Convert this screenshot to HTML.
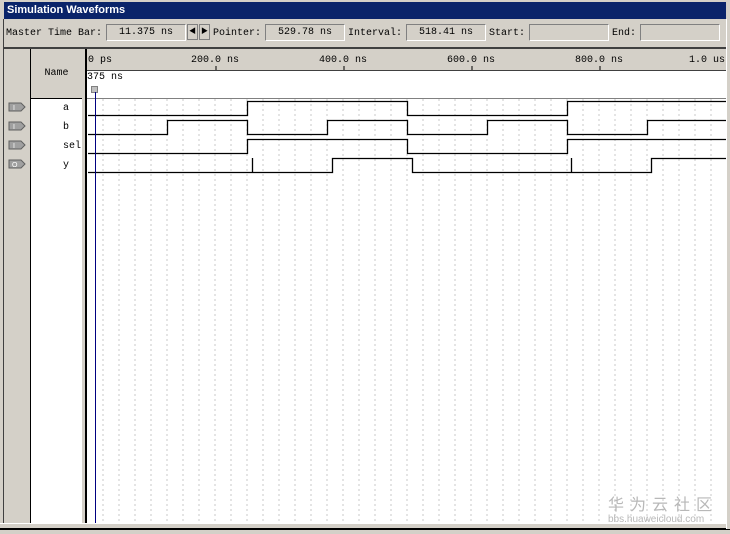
<!DOCTYPE html>
<html><head><meta charset="utf-8"><style>
body{margin:0;width:730px;height:534px;background:#d4d0c8;position:relative;overflow:hidden;font-family:"Liberation Mono","Noto Sans CJK SC",monospace;font-size:10px;}
.a{position:absolute}
.box{position:absolute;top:24px;height:17px;background:#d4d0c8;border:1px solid;border-color:#808080 #fff #fff #808080;box-sizing:border-box;text-align:center;line-height:16px}
.lbl{position:absolute;top:28px}
</style></head><body>
<div class="a" style="left:0;top:0;width:730px;height:2px;background:#d4d0c8"></div>
<div class="a" style="left:4px;top:2px;width:722px;height:17px;background:#0a246a;color:#fff;font:bold 11px 'Liberation Sans',sans-serif;line-height:17px;padding-left:3px;box-sizing:border-box">Simulation Waveforms</div>
<div class="a" style="left:3px;top:19px;width:1px;height:510px;background:#404040"></div>
<span class="lbl" style="left:6px">Master Time Bar:</span>
<div class="box" style="left:106px;width:80px">11.375 ns</div>
<div class="a" style="left:187px;top:24px;width:11px;height:16px;background:#d4d0c8;border:1px solid #808080;box-sizing:border-box;font-size:7px;text-align:center;line-height:14px">◀</div>
<div class="a" style="left:199px;top:24px;width:11px;height:16px;background:#d4d0c8;border:1px solid #808080;box-sizing:border-box;font-size:7px;text-align:center;line-height:14px">▶</div>
<span class="lbl" style="left:213px">Pointer:</span>
<div class="box" style="left:265px;width:80px">529.78 ns</div>
<span class="lbl" style="left:348px">Interval:</span>
<div class="box" style="left:406px;width:80px">518.41 ns</div>
<span class="lbl" style="left:489px">Start:</span>
<div class="box" style="left:529px;width:80px"></div>
<span class="lbl" style="left:612px">End:</span>
<div class="box" style="left:640px;width:80px"></div>
<div class="a" style="left:4px;top:47px;width:722px;height:2px;background:#404040"></div>
<div class="a" style="left:4px;top:49px;width:26px;height:474px;background:#d4d0c8;border-right:1px solid #000"></div>
<div class="a" style="left:31px;top:49px;width:51px;height:49px;line-height:49px;text-align:center">Name</div>
<div class="a" style="left:31px;top:98px;width:51px;height:425px;background:#fff;border-top:1px solid #000"></div>
<div class="a" style="left:82px;top:49px;width:3px;height:474px;background:#d4d0c8"></div>
<div class="a" style="left:85px;top:49px;width:2px;height:474px;background:#000"></div>
<div class="a" style="left:87px;top:49px;width:639px;height:474px;background:#fff"></div>
<div class="a" style="left:87px;top:49px;width:639px;height:21px;background:#d4d0c8;border-bottom:1px solid #404040"></div>
<div class="a" style="left:88px;top:55px">0 ps</div>
<div class="a" style="left:191px;top:55px">200.0 ns</div>
<div class="a" style="left:319px;top:55px">400.0 ns</div>
<div class="a" style="left:447px;top:55px">600.0 ns</div>
<div class="a" style="left:575px;top:55px">800.0 ns</div>
<div class="a" style="left:689px;top:55px">1.0 us</div>
<div class="a" style="left:87px;top:72px">375 ns</div>
<div class="a" style="left:91px;top:86px;width:7px;height:7px;background:#c0c0c0;border:1px solid #808080;box-sizing:border-box"></div>
<div class="a" style="left:87px;top:98px;width:639px;height:1px;background:#808080"></div>
<div class="a" style="left:63px;top:103px">a</div>
<div class="a" style="left:63px;top:122px">b</div>
<div class="a" style="left:63px;top:141px">sel</div>
<div class="a" style="left:63px;top:160px">y</div>
<svg class="a" style="left:0;top:0" width="730" height="534">
<g fill="#a0a0a0" stroke="#606060" stroke-width="1">
<path d="M9 103h12l4 4-4 4H9z"/><path d="M9 122h12l4 4-4 4H9z"/><path d="M9 141h12l4 4-4 4H9z"/><path d="M9 160h12l4 4-4 4H9z"/>
</g>
<g fill="#fff" font-size="7" font-family="Liberation Sans"><text x="13" y="110">I</text><text x="13" y="129">I</text><text x="13" y="148">I</text><text x="12" y="167">O</text></g>
<g stroke="#c8c8c8" stroke-dasharray="2,3">
<path d="M103 99V523M119 99V523M135 99V523M151 99V523M167 99V523M183 99V523M199 99V523M215 99V523M231 99V523M247 99V523M263 99V523M279 99V523M295 99V523M311 99V523M327 99V523M343 99V523M359 99V523M375 99V523M391 99V523M407 99V523M423 99V523M439 99V523M455 99V523M471 99V523M487 99V523M503 99V523M519 99V523M535 99V523M551 99V523M567 99V523M583 99V523M599 99V523M615 99V523M631 99V523M647 99V523M663 99V523M679 99V523M695 99V523M711 99V523"/>
</g>
<g stroke="#000" stroke-width="1"><path d="M216 66v4M344 66v4M472 66v4M600 66v4"/></g>
<g fill="none" stroke="#000" stroke-width="1.3">
<path d="M88 115.5H247.5V101.5H407.5V115.5H567.5V101.5H726"/>
<path d="M88 134.5H167.5V120.5H247.5V134.5H327.5V120.5H407.5V134.5H487.5V120.5H567.5V134.5H647.5V120.5H726"/>
<path d="M88 153.5H247.5V139.5H407.5V153.5H567.5V139.5H726"/>
<path d="M88 172.5H332.5V158.5H412.5V172.5H651.5V158.5H726M252.5 172V158M571.5 172V158"/>
</g>
<path d="M95.5 92V523" stroke="#000080" stroke-width="1"/>
<text x="608" y="510" font-size="16" fill="#b8b8b8" font-family="Noto Sans CJK SC" letter-spacing="6">华为云社区</text>
<text x="608" y="522" font-size="10" fill="#b8b8b8" font-family="Liberation Sans">bbs.huaweicloud.com</text>
</svg>
<div class="a" style="left:0;top:523px;width:730px;height:5px;background:#d4d0c8;border-top:1px solid #fff"></div>
<div class="a" style="left:0;top:528px;width:730px;height:2px;background:#000"></div>
<div class="a" style="left:726px;top:19px;width:4px;height:510px;background:#d4d0c8;border-left:1px solid #fff"></div>
</body></html>
